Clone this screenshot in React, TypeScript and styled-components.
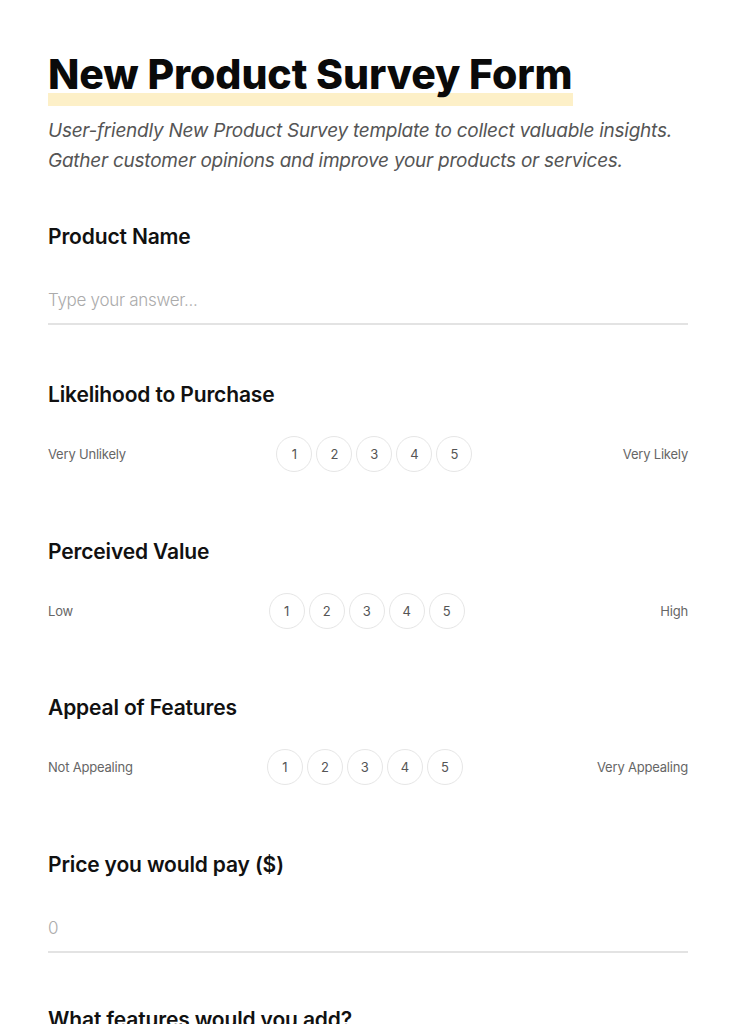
import React from "react";
import styled, { createGlobalStyle } from "styled-components";

const Global = createGlobalStyle`
  html, body { margin: 0; padding: 0; background: #ffffff; }
  body { font-family: "Inter", "Noto Sans", sans-serif; -webkit-font-smoothing: antialiased; }
  * { box-sizing: border-box; }
`;

const Page = styled.main`
  padding: 50px 48px 80px;
  display: flex;
  flex-direction: column;
`;

const Header = styled.header`
  display: flex;
  flex-direction: column;
  align-items: flex-start;
  margin-bottom: 47px;
`;

const Title = styled.h1`
  margin: 0;
  display: inline-block;
  font-size: 41px;
  line-height: 48px;
  font-weight: 800;
  letter-spacing: -0.1px;
  color: #0a0a0a;
  padding-bottom: 8px;
  background-image: linear-gradient(#fdf0c8, #fdf0c8);
  background-repeat: no-repeat;
  background-size: 100% 13px;
  background-position: left bottom;
`;

const Subtitle = styled.p`
  margin: 10px 0 0;
  font-size: 19px;
  line-height: 30px;
  font-style: italic;
  font-weight: 400;
  color: #555555;
  letter-spacing: -0.25px;
`;

const Questions = styled.div`
  display: flex;
  flex-direction: column;
`;

const Question = styled.section<{ $space?: number; $tail?: number }>`
  display: flex;
  flex-direction: column;
  margin-top: ${(p) => p.$space ?? 56}px;
  padding-bottom: ${(p) => p.$tail ?? 0}px;
  &:first-child { margin-top: 0; }
`;

const Label = styled.h2`
  margin: 0;
  font-size: 21px;
  line-height: 28px;
  font-weight: 600;
  letter-spacing: -0.15px;
  color: #111111;
`;

const TextInput = styled.input`
  margin-top: 26px;
  height: 48px;
  border: none;
  border-bottom: 2px solid #e3e3e3;
  outline: none;
  padding: 0;
  font-family: inherit;
  font-size: 17px;
  letter-spacing: -0.3px;
  color: #222;
  background: transparent;
  &::placeholder { color: #ababab; font-weight: 300; }
`;

const TextArea = styled.textarea`
  margin-top: 26px;
  height: 96px;
  border: none;
  border-bottom: 2px solid #e3e3e3;
  outline: none;
  resize: none;
  padding: 12px 0 0;
  font-family: inherit;
  font-size: 17px;
  letter-spacing: -0.3px;
  background: transparent;
  &::placeholder { color: #ababab; font-weight: 300; }
`;

const ScaleRow = styled.div`
  margin-top: 27px;
  display: flex;
  align-items: center;
  justify-content: space-between;
  height: 36px;
`;

const ScaleLabel = styled.span`
  font-size: 13px;
  color: #666666;
  letter-spacing: -0.2px;
`;

const Dots = styled.div`
  display: flex;
  gap: 4px;
`;

const Dot = styled.button`
  width: 36px;
  height: 36px;
  border-radius: 50%;
  border: 1px solid #e6e6e6;
  background: #ffffff;
  font-family: inherit;
  font-size: 13px;
  color: #555555;
  display: flex;
  align-items: center;
  justify-content: center;
  padding: 0;
  cursor: pointer;
`;

function Scale({ low, high }: { low: string; high: string }) {
  return (
    <ScaleRow>
      <ScaleLabel>{low}</ScaleLabel>
      <Dots>
        {[1, 2, 3, 4, 5].map((n) => (
          <Dot key={n} type="button">{n}</Dot>
        ))}
      </Dots>
      <ScaleLabel>{high}</ScaleLabel>
    </ScaleRow>
  );
}

export default function App() {
  return (
    <>
      <Global />
      <Page>
        <Header>
          <Title>New Product Survey Form</Title>
          <Subtitle>
            User-friendly New Product Survey template to collect valuable insights.
            <br />
            Gather customer opinions and improve your products or services.
          </Subtitle>
        </Header>
        <Questions>
          <Question>
            <Label>Product Name</Label>
            <TextInput placeholder="Type your answer..." />
          </Question>
          <Question $tail={9.5}>
            <Label>Likelihood to Purchase</Label>
            <Scale low="Very Unlikely" high="Very Likely" />
          </Question>
          <Question $tail={9.5}>
            <Label>Perceived Value</Label>
            <Scale low="Low" high="High" />
          </Question>
          <Question $tail={9.5}>
            <Label>Appeal of Features</Label>
            <Scale low="Not Appealing" high="Very Appealing" />
          </Question>
          <Question>
            <Label>Price you would pay ($)</Label>
            <TextInput type="number" placeholder="0" />
          </Question>
          <Question $space={53}>
            <Label>What features would you add?</Label>
            <TextArea placeholder="Type your answer..." />
          </Question>
        </Questions>
      </Page>
    </>
  );
}
